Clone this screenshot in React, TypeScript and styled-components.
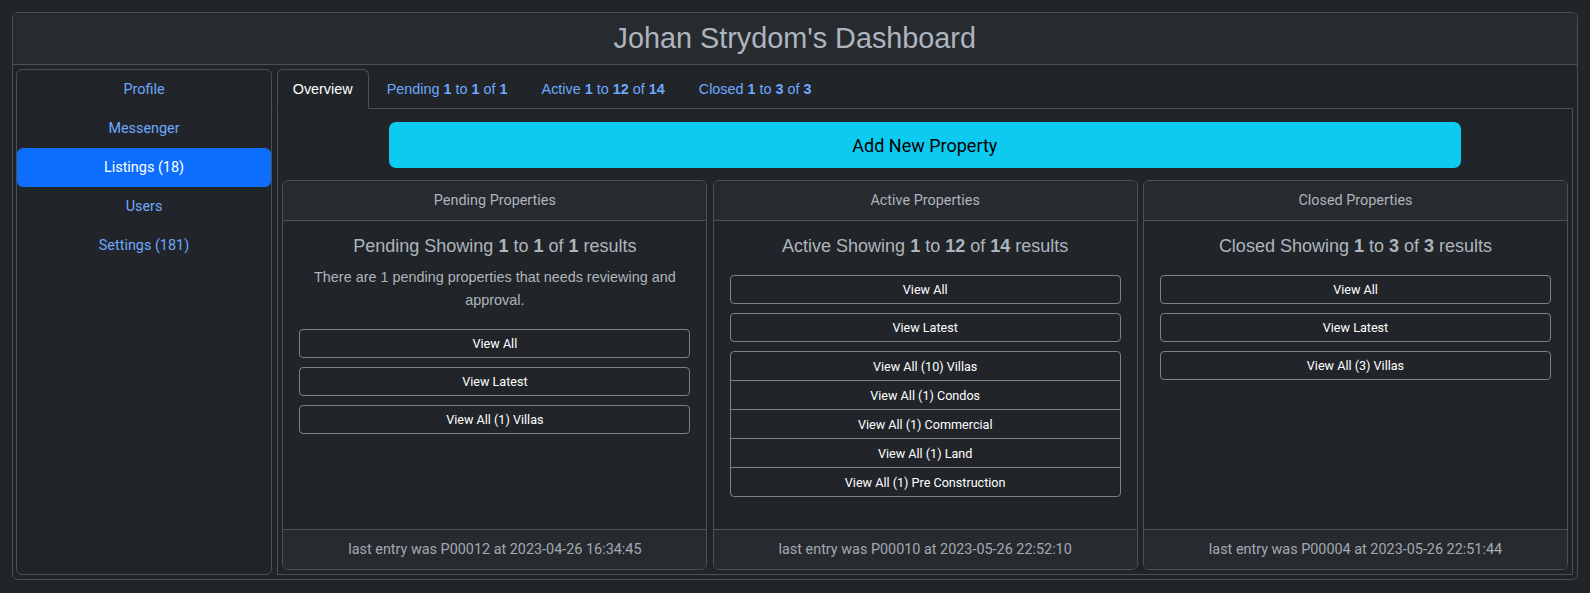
import React from "react";
import styled, { createGlobalStyle } from "styled-components";

const GlobalStyle = createGlobalStyle`
  html, body {
    margin: 0;
    padding: 0;
    background: #212529;
    color: #dee2e6;
    font-family: Roboto, "Liberation Sans", Arial, sans-serif;
  }
  * { box-sizing: border-box; }
`;

const Page = styled.div`
  padding: 12px 12px 0 11.5px;
`;

const Dashboard = styled.section`
  height: 568px;
  border: 1px solid #495057;
  border-radius: 6px;
  background: #212529;
  display: flex;
  flex-direction: column;
  overflow: hidden;
`;

const Header = styled.header`
  height: 52px;
  flex: none;
  display: flex;
  align-items: center;
  justify-content: center;
  background: #272b30;
  border-bottom: 1px solid #495057;
`;

const Title = styled.h1`
  margin: 0;
  font-family: "Liberation Sans", Arial, sans-serif;
  font-weight: 400;
  font-size: 28.8px;
  line-height: 1.2;
  color: #adb5bd;
`;

const Body = styled.div`
  flex: 1;
  display: flex;
  gap: 4.7px;
  padding: 4px 4px 4px 3.5px;
  min-height: 0;
`;

const Sidebar = styled.nav`
  width: 256px;
  flex: none;
  border: 1px solid #495057;
  border-radius: 6px;
  display: flex;
  flex-direction: column;
`;

const SideLink = styled.a<{ $active?: boolean }>`
  height: 39px;
  display: flex;
  align-items: center;
  justify-content: center;
  font-size: 14.4px;
  color: ${(p) => (p.$active ? "#ffffff" : "#6ea8fe")};
  background: ${(p) => (p.$active ? "#0d6efd" : "transparent")};
  border-radius: 6px;
  text-decoration: none;
  cursor: pointer;
`;

const Main = styled.div`
  flex: 1;
  display: flex;
  flex-direction: column;
  min-width: 0;
`;

const TabNav = styled.div`
  height: 40px;
  flex: none;
  display: flex;
  align-items: stretch;
  border-bottom: 1px solid #495057;
`;

const Tab = styled.a<{ $active?: boolean }>`
  display: flex;
  align-items: center;
  padding: 0 15px;
  margin-bottom: -1px;
  font-family: "Liberation Sans", Arial, sans-serif;
  font-size: 14.4px;
  color: ${(p) => (p.$active ? "#ffffff" : "#6ea8fe")};
  border: 1px solid ${(p) => (p.$active ? "#495057" : "transparent")};
  border-bottom-color: ${(p) => (p.$active ? "#212529" : "transparent")};
  border-radius: 6px 6px 0 0;
  background: ${(p) => (p.$active ? "#212529" : "transparent")};
  text-decoration: none;
  white-space: pre;
  cursor: pointer;

  & + & {
    margin-left: 2px;
  }

  b {
    font-weight: 700;
  }
`;

const Pane = styled.div`
  flex: 1;
  display: flex;
  flex-direction: column;
  border: 1px solid #495057;
  border-top: none;
  padding: 13px 0 4px;
  min-height: 0;
`;

const AddButton = styled.button`
  width: 1072px;
  height: 46px;
  margin: 0 auto;
  flex: none;
  border: none;
  border-radius: 7px;
  background: #0dcaf0;
  color: #000;
  font-family: Roboto, sans-serif;
  font-size: 18px;
  cursor: pointer;
`;

const CardGrid = styled.div`
  flex: 1;
  margin-top: 11.7px;
  display: grid;
  grid-template-columns: repeat(3, 1fr);
  gap: 5.3px;
  padding: 0 4px 0 4.7px;
  min-height: 0;
`;

const Card = styled.div`
  border: 1px solid #495057;
  border-radius: 6px;
  display: flex;
  flex-direction: column;
  overflow: hidden;
  background: #212529;
`;

const CardHeader = styled.div`
  height: 40px;
  flex: none;
  display: flex;
  align-items: center;
  justify-content: center;
  background: #272b30;
  border-bottom: 1px solid #495057;
  color: #adb5bd;
  font-size: 14.4px;
`;

const CardBody = styled.div`
  flex: 1;
  padding: 15px 16px 16px;
  text-align: center;
`;

const CardTitle = styled.h5`
  margin: 0 0 9px;
  font-family: "Liberation Sans", Arial, sans-serif;
  font-weight: 400;
  font-size: 18px;
  line-height: 1.2;
  color: #adb5bd;

  b {
    font-weight: 700;
  }
`;

const CardText = styled.p`
  margin: 0 0 8.5px;
  font-family: "Liberation Sans", Arial, sans-serif;
  font-size: 14.4px;
  line-height: 22.7px;
  color: #adb5bd;
`;

const Stack = styled.div`
  padding-top: 8.8px;
  display: flex;
  flex-direction: column;
  gap: 9px;
`;

const OutlineButton = styled.button`
  height: 29px;
  width: 100%;
  border: 1px solid #7a8188;
  border-radius: 4px;
  background: transparent;
  color: #ffffff;
  font-family: Roboto, sans-serif;
  font-size: 12.6px;
  cursor: pointer;
`;

const ListGroup = styled.div`
  border: 1px solid #7a8188;
  border-radius: 4px;
  display: flex;
  flex-direction: column;
  overflow: hidden;
`;

const ListItem = styled.button`
  height: 28px;
  border: none;
  background: transparent;
  color: #ffffff;
  font-family: Roboto, sans-serif;
  font-size: 12.6px;
  cursor: pointer;

  & + & {
    border-top: 1px solid #7a8188;
    height: 29px;
  }
`;

const CardFooter = styled.div`
  height: 40px;
  flex: none;
  display: flex;
  align-items: center;
  justify-content: center;
  background: #272b30;
  border-top: 1px solid #495057;
  color: #a3a9b0;
  font-size: 14.4px;
`;

type CardData = {
  header: string;
  label: string;
  from: string;
  to: string;
  total: string;
  text?: string;
  buttons: string[];
  list?: string[];
  footer: string;
};

const cards: CardData[] = [
  {
    header: "Pending Properties",
    label: "Pending",
    from: "1",
    to: "1",
    total: "1",
    text: "There are 1 pending properties that needs reviewing and approval.",
    buttons: ["View All", "View Latest", "View All (1) Villas"],
    footer: "last entry was P00012 at 2023-04-26 16:34:45",
  },
  {
    header: "Active Properties",
    label: "Active",
    from: "1",
    to: "12",
    total: "14",
    buttons: ["View All", "View Latest"],
    list: [
      "View All (10) Villas",
      "View All (1) Condos",
      "View All (1) Commercial",
      "View All (1) Land",
      "View All (1) Pre Construction",
    ],
    footer: "last entry was P00010 at 2023-05-26 22:52:10",
  },
  {
    header: "Closed Properties",
    label: "Closed",
    from: "1",
    to: "3",
    total: "3",
    buttons: ["View All", "View Latest", "View All (3) Villas"],
    footer: "last entry was P00004 at 2023-05-26 22:51:44",
  },
];

const sideLinks = ["Profile", "Messenger", "Listings (18)", "Users", "Settings (181)"];

export default function App() {
  return (
    <>
      <GlobalStyle />
      <Page>
        <Dashboard>
          <Header>
            <Title>Johan Strydom's Dashboard</Title>
          </Header>
          <Body>
            <Sidebar>
              {sideLinks.map((l) => (
                <SideLink key={l} $active={l.startsWith("Listings")}>
                  {l}
                </SideLink>
              ))}
            </Sidebar>
            <Main>
              <TabNav>
                <Tab $active>Overview</Tab>
                <Tab>
                  Pending <b>1</b> to <b>1</b> of <b>1</b>
                </Tab>
                <Tab>
                  Active <b>1</b> to <b>12</b> of <b>14</b>
                </Tab>
                <Tab>
                  Closed <b>1</b> to <b>3</b> of <b>3</b>
                </Tab>
              </TabNav>
              <Pane>
                <AddButton>Add New Property</AddButton>
                <CardGrid>
                  {cards.map((c) => (
                    <Card key={c.header}>
                      <CardHeader>{c.header}</CardHeader>
                      <CardBody>
                        <CardTitle>
                          {c.label} Showing <b>{c.from}</b> to <b>{c.to}</b> of{" "}
                          <b>{c.total}</b> results
                        </CardTitle>
                        {c.text && <CardText>{c.text}</CardText>}
                        <Stack>
                          {c.buttons.map((b) => (
                            <OutlineButton key={b}>{b}</OutlineButton>
                          ))}
                          {c.list && (
                            <ListGroup>
                              {c.list.map((i) => (
                                <ListItem key={i}>{i}</ListItem>
                              ))}
                            </ListGroup>
                          )}
                        </Stack>
                      </CardBody>
                      <CardFooter>{c.footer}</CardFooter>
                    </Card>
                  ))}
                </CardGrid>
              </Pane>
            </Main>
          </Body>
        </Dashboard>
      </Page>
    </>
  );
}
